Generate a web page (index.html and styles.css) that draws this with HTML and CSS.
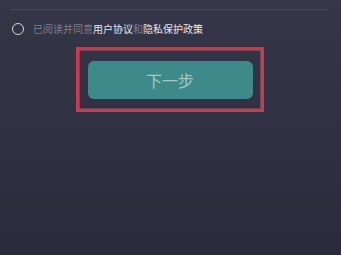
FILE: index.html
```html
<!DOCTYPE html>
<html lang="zh-CN">
<head>
<meta charset="utf-8">
<link rel="stylesheet" href="styles.css">
</head>
<body>
<div class="page">
  <div class="divider"></div>
  <div class="agree">
    <span class="radio"></span>
    <span class="agree-text">已阅读并同意<b>用户协议</b>和<b>隐私保护政策</b></span>
  </div>
  <div class="highlight">
    <button class="next">下一步</button>
  </div>
</div>
</body>
</html>
```
FILE: styles.css
```css
html, body {
  margin: 0;
  padding: 0;
}
body {
  width: 341px;
  height: 255px;
  overflow: hidden;
  background: linear-gradient(#363649 0%, #303143 45%, #2a2b3a 100%);
  font-family: "Noto Sans CJK SC", "Noto Sans", sans-serif;
}
.page {
  display: flex;
  flex-direction: column;
}
.divider {
  height: 1px;
  margin: 9px 13px 0 10px;
  background: #45465b;
}
.agree {
  display: flex;
  align-items: center;
  margin-top: 12px;
  padding-left: 12px;
  height: 13px;
}
.radio {
  width: 10px;
  height: 10px;
  border: 1.5px solid #d4d4da;
  border-radius: 50%;
  flex: none;
}
.agree-text {
  margin-left: 9px;
  font-size: 10px;
  line-height: 13px;
  color: #7d7e8c;
  white-space: nowrap;
}
.agree-text b {
  font-weight: normal;
  color: #e6e6ea;
}
.highlight {
  margin: 12px 0 0 76px;
  width: 182px;
  height: 59px;
  border: 3px solid #cd3a4c;
  box-shadow: inset 0 0 0 1px rgba(230,110,120,0.35);
  display: flex;
  align-items: center;
  justify-content: center;
}
.next {
  width: 165px;
  height: 38px;
  border: none;
  border-radius: 6px;
  background: #3e8a8a;
  color: #a5c6c3;
  font-family: "Noto Sans CJK SC", "Noto Sans", sans-serif;
  font-size: 16px;
  padding: 0;
  margin-top: 1px;
}
```
